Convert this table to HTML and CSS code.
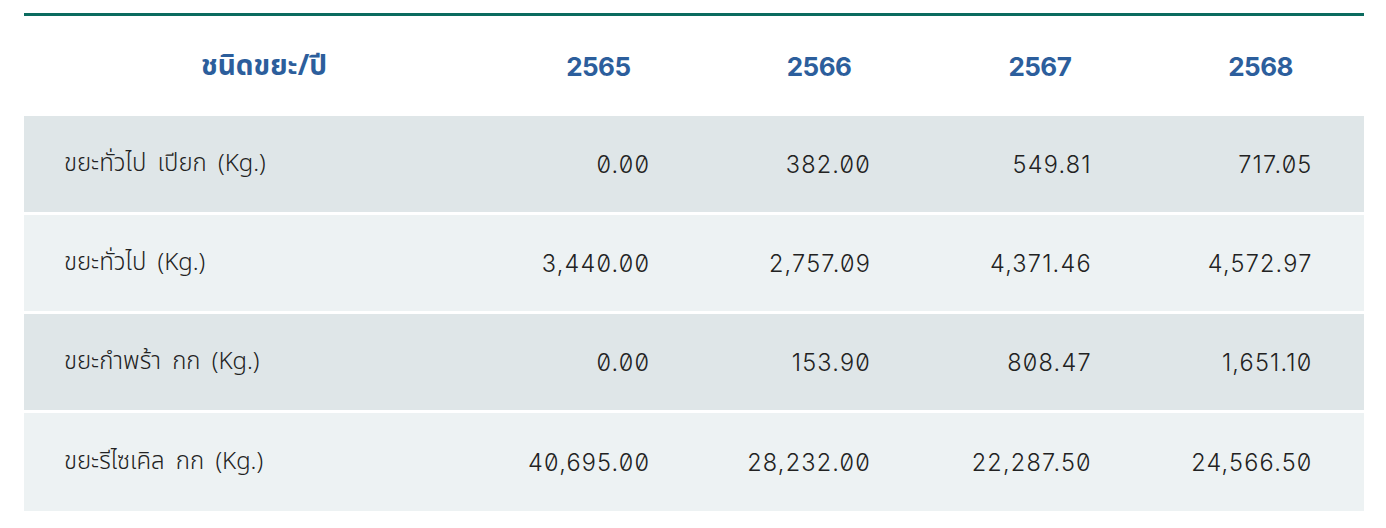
FILE: index.html
```html
<!DOCTYPE html>
<html lang="th">
<head>
<meta charset="utf-8">
<title>ชนิดขยะ</title>
<link rel="stylesheet" href="styles.css">
</head>
<body>
<div class="wrap">
<table class="waste">
  <colgroup>
    <col class="c-name">
    <col class="c-year"><col class="c-year"><col class="c-year"><col class="c-year">
  </colgroup>
  <thead>
    <tr>
      <th class="h-name">ชนิดขยะ/ปี</th>
      <th class="h-year">2565</th>
      <th class="h-year">2566</th>
      <th class="h-year">2567</th>
      <th class="h-year">2568</th>
    </tr>
  </thead>
  <tbody>
    <tr class="odd">
      <td class="name">ขยะทั่วไป เปียก (Kg.)</td>
      <td class="num">0.00</td><td class="num">382.00</td><td class="num">549.81</td><td class="num">717.05</td>
    </tr>
    <tr class="even">
      <td class="name">ขยะทั่วไป (Kg.)</td>
      <td class="num">3,440.00</td><td class="num">2,757.09</td><td class="num">4,371.46</td><td class="num">4,572.97</td>
    </tr>
    <tr class="odd">
      <td class="name">ขยะกำพร้า กก (Kg.)</td>
      <td class="num">0.00</td><td class="num">153.90</td><td class="num">808.47</td><td class="num">1,651.10</td>
    </tr>
    <tr class="even last">
      <td class="name">ขยะรีไซเคิล กก (Kg.)</td>
      <td class="num">40,695.00</td><td class="num">28,232.00</td><td class="num">22,287.50</td><td class="num">24,566.50</td>
    </tr>
  </tbody>
</table>
</div>
</body>
</html>
```
FILE: styles.css
```css
html, body {
  margin: 0;
  padding: 0;
  background: #ffffff;
}
.wrap {
  padding: 13px 22px 0 24px;
}
.waste {
  width: 1340px;
  table-layout: fixed;
  border-collapse: collapse;
  border-top: 3px solid #0b6b5f;
  font-family: "Noto Sans Thai", "Noto Sans", "DejaVu Sans", sans-serif;
  color: #222;
}
.c-name { width: 457px; }
.c-year { width: 220.75px; }
.waste th {
  height: 100px;
  padding: 0;
  color: #2c5e9c;
  font-weight: 700;
  font-size: 26px;
  vertical-align: middle;
}
.waste th.h-name {
  text-align: center;
  padding-left: 23px;
  font-size: 28px;
}
.waste th.h-year {
  text-align: center;
  padding-left: 14px;
  font-family: "Inter", "Noto Sans", sans-serif;
  font-weight: 700;
  font-size: 26px;
  letter-spacing: -0.5px;
}
.waste td {
  height: 96px;
  padding: 0;
  border-bottom: 3px solid #fff;
  vertical-align: middle;
  font-size: 24px;
}
.waste tr.last td { border-bottom: 0; height: 98px; }
.odd td { background: #dfe6e8; }
.even td { background: #edf2f3; }
.waste td.name {
  padding-left: 40px;
  font-weight: 300;
  font-size: 24px;
  word-spacing: 5px;
}
.waste td.num {
  text-align: right;
  padding-right: 51.5px;
  font-family: "Inter", sans-serif;
  font-weight: 300;
  font-size: 23.5px;
  font-feature-settings: "zero" 1;
  letter-spacing: 1.2px;
}
```
